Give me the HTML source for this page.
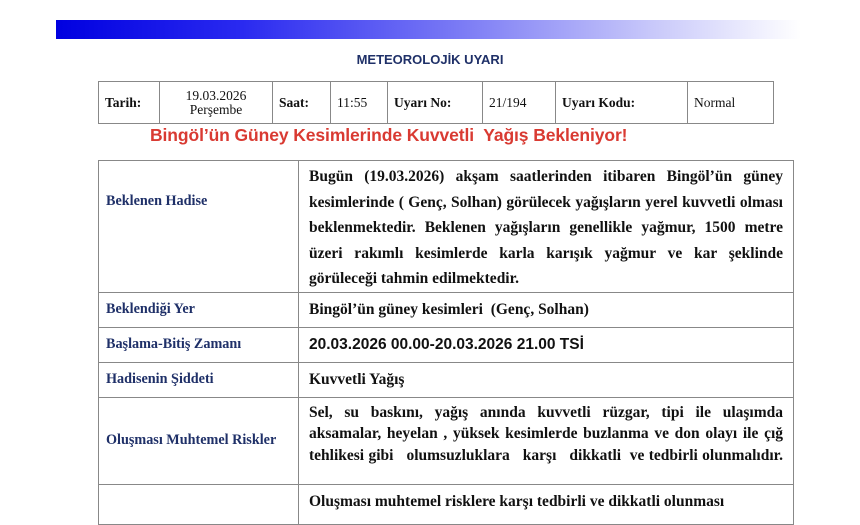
<!DOCTYPE html>
<html><head><meta charset="utf-8"><style>
*{margin:0;padding:0;box-sizing:border-box}
body{width:860px;height:504px;background:#fff;position:relative;overflow:hidden;font-family:"Liberation Serif",serif}
.abs{position:absolute}
.bar{left:56px;top:20px;width:745px;height:19px;background:linear-gradient(90deg,#0000e0 0%,#2a2af0 25%,#7d7df5 55%,#c8c8fa 80%,#fff 100%)}
.title{left:0;width:860px;top:52px;text-align:center;font:bold 13px "Liberation Sans",sans-serif;color:#1f3068}
table{border-collapse:collapse;position:absolute}
td{border:1.3px solid #888;color:#111}
#t1{left:98px;top:81px;width:676px;height:43px;font-size:13.5px}
#t1 td{padding:0 6px;vertical-align:middle}
.red{left:150px;top:125px;font:bold 17.5px "Liberation Sans",sans-serif;color:#d93a32;letter-spacing:-0.1px}
#t2{left:98px;top:160px;width:696px;font-size:15.5px}
#t2 td.l{width:200px;color:#1f3068;font-weight:bold;font-size:14.2px;padding:0 7px;vertical-align:middle}
#t2 td.r{font-weight:bold;padding:0 10px}
.j{text-align:justify;text-align-last:justify;white-space:nowrap}
</style></head><body>
<div class="abs bar"></div>
<div class="abs title">METEOROLOJİK UYARI</div>
<table id="t1"><tr>
<td style="width:61px;font-weight:bold">Tarih:</td>
<td style="width:113px;text-align:center;line-height:14px">19.03.2026<br>Perşembe</td>
<td style="width:58px;font-weight:bold">Saat:</td>
<td style="width:57px">11:55</td>
<td style="width:95px;font-weight:bold">Uyarı No:</td>
<td style="width:73px">21/194</td>
<td style="width:132px;font-weight:bold">Uyarı Kodu:</td>
<td>Normal</td>
</tr></table>
<div class="abs red">Bingöl’ün Güney Kesimlerinde Kuvvetli&nbsp; Yağış Bekleniyor!</div>
<table id="t2">
<tr style="height:130px"><td class="l" style="vertical-align:top;padding-top:32px">Beklenen Hadise</td>
<td class="r" style="line-height:25.5px;padding-top:3px;vertical-align:top">
<div class="j">Bugün (19.03.2026) akşam saatlerinden itibaren Bingöl’ün güney</div>
<div class="j">kesimlerinde ( Genç, Solhan) görülecek yağışların yerel kuvvetli olması</div>
<div class="j">beklenmektedir. Beklenen yağışların genellikle yağmur, 1500 metre</div>
<div class="j">üzeri rakımlı kesimlerde karla karışık yağmur ve kar şeklinde</div>
<div>görüleceği tahmin edilmektedir.</div></td></tr>
<tr style="height:35px"><td class="l">Beklendiği Yer</td><td class="r">Bingöl’ün güney kesimleri&nbsp; (Genç, Solhan)</td></tr>
<tr style="height:35px"><td class="l">Başlama-Bitiş Zamanı</td><td class="r" style="font-family:'Liberation Sans',sans-serif;font-size:15.5px">20.03.2026 00.00-20.03.2026 21.00 TSİ</td></tr>
<tr style="height:35px"><td class="l">Hadisenin Şiddeti</td><td class="r">Kuvvetli Yağış</td></tr>
<tr style="height:87px"><td class="l">Oluşması Muhtemel Riskler</td>
<td class="r" style="line-height:21.5px;vertical-align:top;padding-top:4px">
<div class="j">Sel, su baskını, yağış anında kuvvetli rüzgar, tipi ile ulaşımda</div>
<div class="j">aksamalar, heyelan , yüksek kesimlerde buzlanma ve don olayı ile çığ</div>
<div class="j">tehlikesi gibi&nbsp;&nbsp; olumsuzluklara&nbsp;&nbsp; karşı&nbsp;&nbsp; dikkatli&nbsp; ve tedbirli olunmalıdır.</div></td></tr>
<tr style="height:40px"><td class="l"></td><td class="r" style="vertical-align:top;padding-top:8px">Oluşması muhtemel risklere karşı tedbirli ve dikkatli olunması</td></tr>
</table>
</body></html>
